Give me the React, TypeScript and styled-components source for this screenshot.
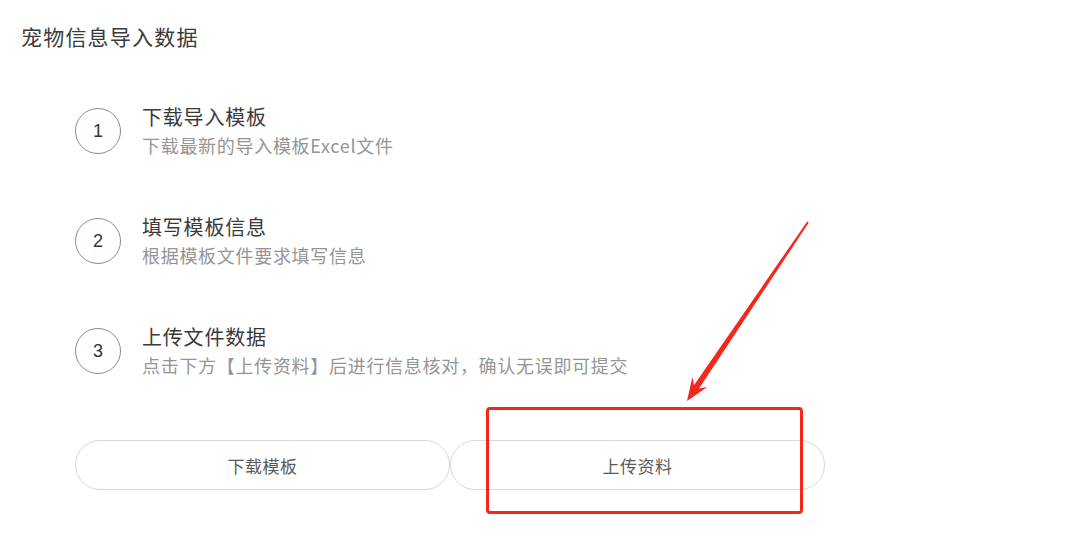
import React from "react";
import styled, { createGlobalStyle } from "styled-components";

const GlobalStyle = createGlobalStyle`
  html, body {
    margin: 0;
    padding: 0;
    background: #ffffff;
  }
  body {
    font-family: "Noto Sans CJK SC", "Noto Sans", sans-serif;
    color: #333333;
  }
`;

const Page = styled.div`
  position: relative;
  width: 1078px;
  height: 540px;
  overflow: hidden;
  background: #ffffff;
`;

const Header = styled.h1`
  margin: 0;
  padding: 22px 0 0 21px;
  font-size: 21px;
  line-height: 28px;
  font-weight: 400;
  letter-spacing: 1.2px;
  color: #3a3a3a;
`;

const Steps = styled.div`
  display: flex;
  flex-direction: column;
  gap: 58px;
  margin: 55px 0 0 75px;
`;

const StepRow = styled.div`
  display: flex;
  align-items: center;
  gap: 21px;
  height: 52px;
`;

const Circle = styled.div`
  width: 44px;
  height: 44px;
  border: 1px solid #8c8c8c;
  border-radius: 50%;
  display: flex;
  align-items: center;
  justify-content: center;
  font-family: "Liberation Sans", "Noto Sans", sans-serif;
  font-size: 18px;
  color: #333333;
  flex-shrink: 0;
`;

const StepText = styled.div`
  display: flex;
  flex-direction: column;
`;

const StepTitle = styled.div`
  font-size: 20px;
  line-height: 24px;
  letter-spacing: 0.8px;
  color: #3a3a3a;
`;

const StepDesc = styled.div`
  margin-top: 4px;
  font-size: 18px;
  line-height: 24px;
  letter-spacing: 0.7px;
  color: #959595;
`;

const Buttons = styled.div`
  display: flex;
  margin: 63px 0 0 75px;
`;

const PillButton = styled.button`
  width: 375px;
  height: 50px;
  border: 1px solid #d9d9d9;
  border-radius: 25px;
  background: #ffffff;
  font-family: "Noto Sans CJK SC", "Noto Sans", sans-serif;
  font-size: 17px;
  letter-spacing: 0.5px;
  color: #5a5a5a;
  cursor: pointer;
  padding: 0;
`;

const RedBox = styled.div`
  position: absolute;
  left: 486px;
  top: 407px;
  width: 311px;
  height: 101px;
  border: 3px solid #f8261a;
  border-radius: 4px;
  pointer-events: none;
`;

const ArrowSvg = styled.svg`
  position: absolute;
  left: 0;
  top: 0;
  pointer-events: none;
`;

const steps = [
  { n: "1", title: "下载导入模板", desc: "下载最新的导入模板Excel文件" },
  { n: "2", title: "填写模板信息", desc: "根据模板文件要求填写信息" },
  { n: "3", title: "上传文件数据", desc: "点击下方【上传资料】后进行信息核对，确认无误即可提交" },
];

function arrowPoints(): string {
  const T = { x: 808, y: 222 };
  const P = { x: 687, y: 401 };
  const dx = P.x - T.x;
  const dy = P.y - T.y;
  const len = Math.hypot(dx, dy);
  const u = { x: dx / len, y: dy / len };
  const n = { x: u.y, y: -u.x };
  const at = (d: number, w: number) => ({
    x: P.x - u.x * d + n.x * w,
    y: P.y - u.y * d + n.y * w,
  });
  const pts = [
    { x: T.x + n.x * 1, y: T.y + n.y * 1 },
    at(17, 3),
    at(23, 9),
    P,
    at(23, -9),
    at(17, -3),
    { x: T.x - n.x * 1, y: T.y - n.y * 1 },
  ];
  return pts.map((p) => `${p.x.toFixed(1)},${p.y.toFixed(1)}`).join(" ");
}

export default function App() {
  return (
    <Page>
      <GlobalStyle />
      <Header>宠物信息导入数据</Header>
      <Steps>
        {steps.map((s) => (
          <StepRow key={s.n}>
            <Circle>{s.n}</Circle>
            <StepText>
              <StepTitle>{s.title}</StepTitle>
              <StepDesc>{s.desc}</StepDesc>
            </StepText>
          </StepRow>
        ))}
      </Steps>
      <Buttons>
        <PillButton>下载模板</PillButton>
        <PillButton>上传资料</PillButton>
      </Buttons>
      <RedBox />
      <ArrowSvg width="1078" height="540" viewBox="0 0 1078 540">
        <polygon points={arrowPoints()} fill="#f8261a" />
      </ArrowSvg>
    </Page>
  );
}
